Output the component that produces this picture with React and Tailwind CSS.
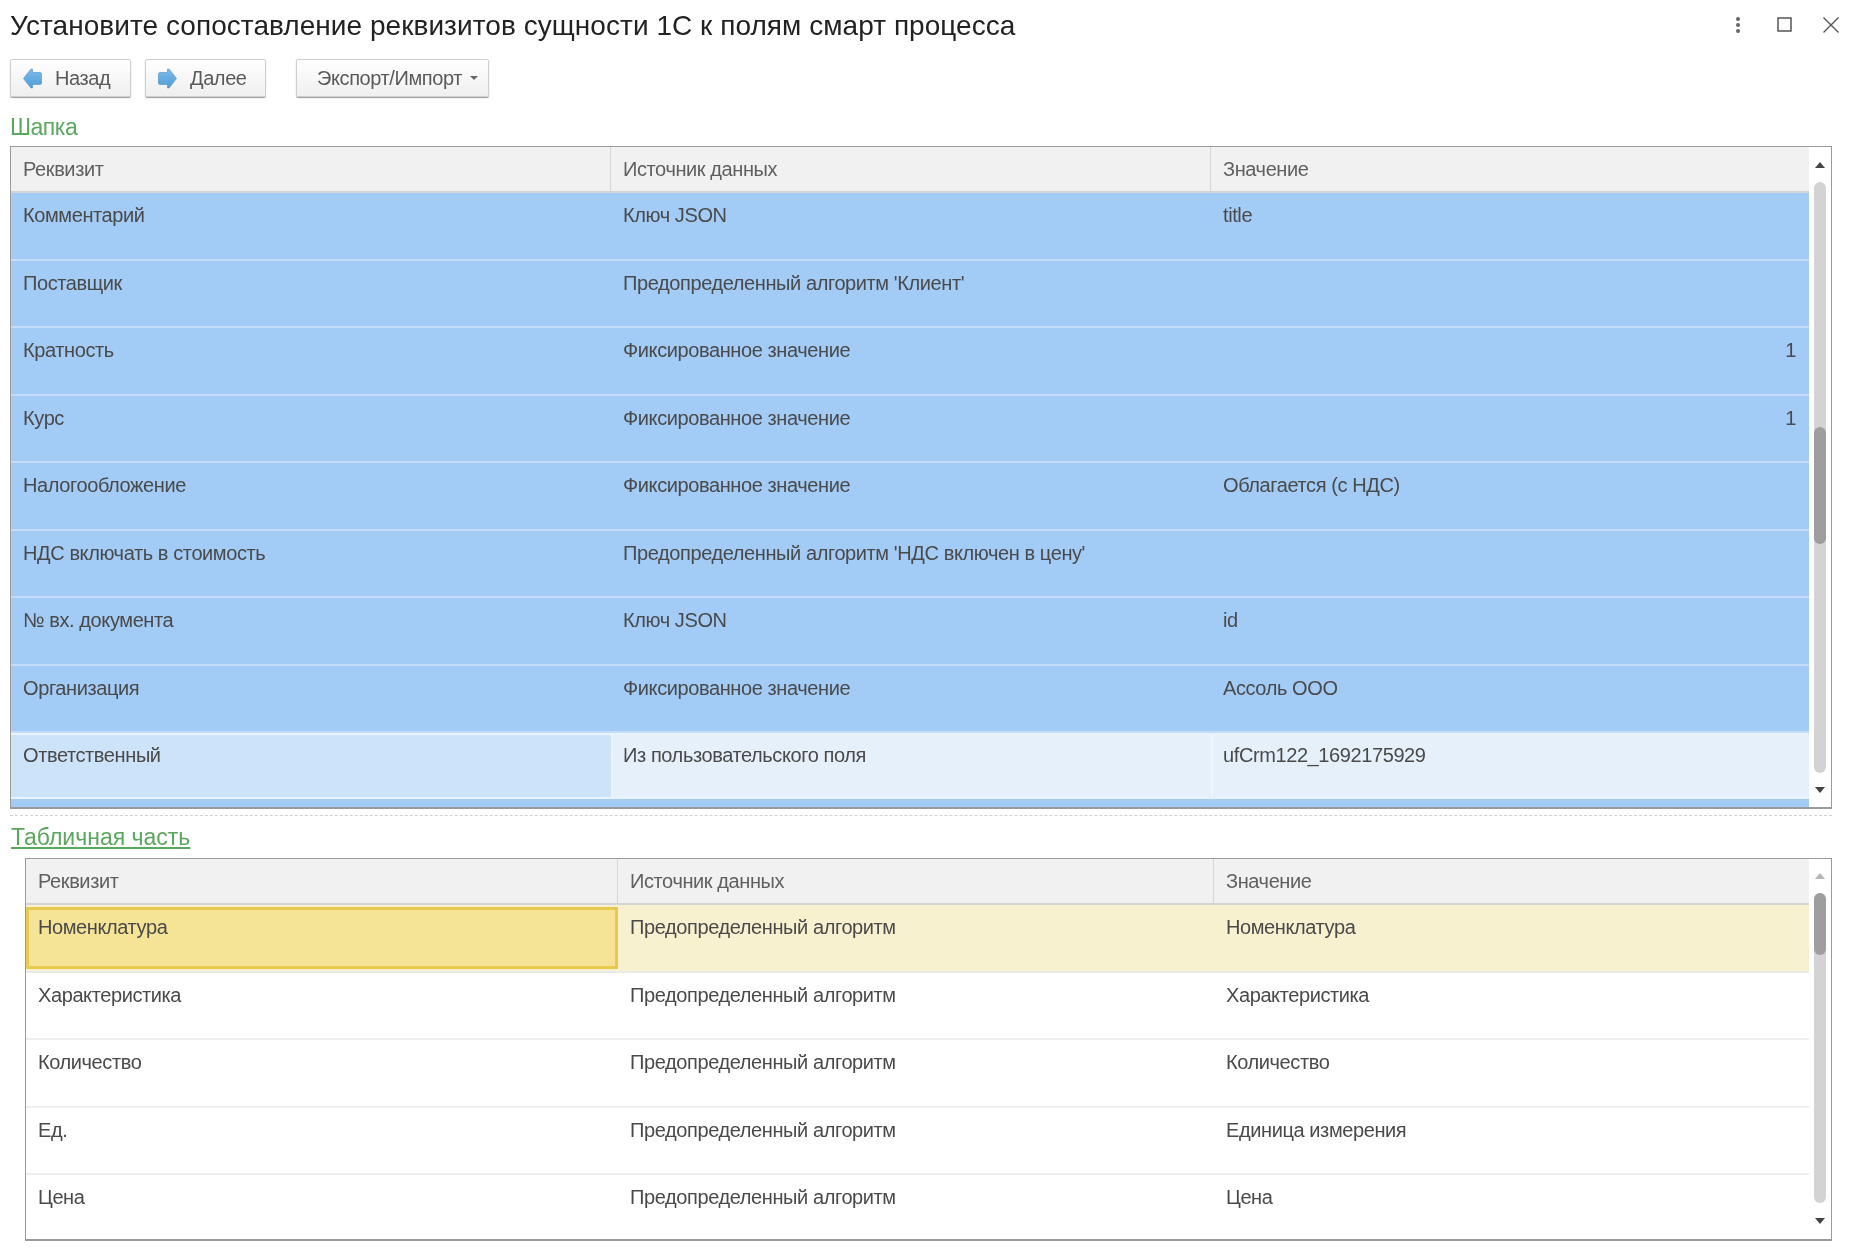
const FONT = "font-['Liberation_Sans',Arial,sans-serif]";

const top = [
  ["Комментарий", "Ключ JSON", "title"],
  ["Поставщик", "Предопределенный алгоритм 'Клиент'", ""],
  ["Кратность", "Фиксированное значение", "1", true],
  ["Курс", "Фиксированное значение", "1", true],
  ["Налогообложение", "Фиксированное значение", "Облагается (с НДС)"],
  ["НДС включать в стоимость", "Предопределенный алгоритм 'НДС включен в цену'", ""],
  ["№ вх. документа", "Ключ JSON", "id"],
  ["Организация", "Фиксированное значение", "Ассоль ООО"],
];

const bottom = [
  ["Характеристика", "Предопределенный алгоритм", "Характеристика"],
  ["Количество", "Предопределенный алгоритм", "Количество"],
  ["Ед.", "Предопределенный алгоритм", "Единица измерения"],
  ["Цена", "Предопределенный алгоритм", "Цена"],
];

function Arrow({ dir }) {
  return (
    <svg width="19" height="21" viewBox="0 0 19 21" className="shrink-0">
      <defs>
        <linearGradient id="ag" x1="0" y1="0" x2="0" y2="1">
          <stop offset="0" stopColor="#7dbdea" />
          <stop offset="1" stopColor="#4f9bd8" />
        </linearGradient>
      </defs>
      <path
        d={dir === "left"
          ? "M0.5 10.5 L8 1 L9.5 1 L9.5 4.5 L17 4.5 Q18.5 4.5 18.5 6 L18.5 15 Q18.5 16.5 17 16.5 L9.5 16.5 L9.5 20 L8 20 Z"
          : "M18.5 10.5 L11 1 L9.5 1 L9.5 4.5 L2 4.5 Q0.5 4.5 0.5 6 L0.5 15 Q0.5 16.5 2 16.5 L9.5 16.5 L9.5 20 L11 20 Z"}
        fill="url(#ag)"
        stroke="#4a8fc9"
        strokeWidth="0.6"
      />
    </svg>
  );
}

function Button({ className, children }) {
  return (
    <button className={"flex h-[38px] items-center rounded-[2px] border border-[#cfcfcf] bg-gradient-to-b from-white to-[#efefef] text-[20px] leading-none tracking-[-0.4px] text-[#5a5a5a] shadow-[0_1px_1px_#999] " + className}>
      {children}
    </button>
  );
}

function Tri({ up, light }) {
  return (
    <svg width="10" height="6" viewBox="0 0 10 6">
      <path d={up ? "M5 0 L10 6 L0 6 Z" : "M5 6 L10 0 L0 0 Z"} fill={light ? "#b5b5b5" : "#444"} />
    </svg>
  );
}

function Scroll({ upLight, thumbTop, thumbH, trackH, thumbColor, upH, downH }) {
  return (
    <div className="flex h-full w-[22px] shrink-0 flex-col items-center">
      <div className={"flex w-full items-center justify-center " + upH}>
        <Tri up light={upLight} />
      </div>
      <div className={"relative w-[12px] rounded-[6px] bg-[#d3d3d3] " + trackH}>
        <div className={"absolute left-0 w-full rounded-[6px] " + thumbTop + " " + thumbH + " " + thumbColor} />
      </div>
      <div className={"flex w-full items-center justify-center " + downH}>
        <Tri />
      </div>
    </div>
  );
}

function Header({ cols }) {
  return (
    <div className="flex h-[46px] shrink-0 border-b-2 border-[#d4d4d4] bg-[#f1f1f1] text-[#606060]">
      {["Реквизит", "Источник данных", "Значение"].map((t, i) => (
        <div key={t} className={"flex items-center border-[#d6d6d6] " + cols[i]}>
          {t}
        </div>
      ))}
    </div>
  );
}

function Cell({ className, right, children }) {
  return (
    <div className={"h-full pt-[11px] leading-[23px] " + (right ? "text-right " : "") + className}>{children}</div>
  );
}

export default function App() {
  const colsA = ["w-[600px] border-r pl-[12px]", "w-[600px] border-r pl-[12px]", "flex-1 pl-[12px]"];
  const colsB = ["w-[592px] border-r pl-[12px]", "w-[596px] border-r pl-[12px]", "flex-1 pl-[12px]"];
  return (
    <div className={"h-[1253px] w-[1858px] overflow-hidden bg-white text-[20px] tracking-[-0.4px] text-[#4a4a4a] blur-[0.4px] " + FONT}>
      <div className="flex h-[50px] items-center justify-between pl-[10px] pr-[18px] pt-[1px]">
        <h1 className="text-[28px] font-normal leading-[50px] tracking-[0.05px] text-[#222]">
          Установите сопоставление реквизитов сущности 1С к полям смарт процесса
        </h1>
        <div className="flex items-center">
          <svg width="6" height="18" viewBox="0 0 6 18" className="mb-[2px] mr-[36px]">
            <circle cx="3" cy="3" r="2" fill="#666" />
            <circle cx="3" cy="9" r="2" fill="#666" />
            <circle cx="3" cy="15" r="2" fill="#666" />
          </svg>
          <svg width="16" height="16" viewBox="0 0 16 16" className="mb-[2px] mr-[29px]">
            <rect x="1" y="1" width="13" height="13" fill="none" stroke="#555" strokeWidth="1.5" />
          </svg>
          <svg width="18" height="18" viewBox="0 0 18 18" className="mb-[2px]">
            <path d="M1.5 1.5 L16.5 16.5 M16.5 1.5 L1.5 16.5" stroke="#555" strokeWidth="1.4" />
          </svg>
        </div>
      </div>

      <div className="mt-[9px] flex pl-[10px]">
        <Button className="w-[121px] gap-[13px] pl-[12px]">
          <Arrow dir="left" />
          Назад
        </Button>
        <Button className="ml-[14px] w-[121px] gap-[13px] pl-[12px]">
          <Arrow dir="right" />
          Далее
        </Button>
        <Button className="ml-[30px] w-[193px] pl-[20px]">
          Экспорт/Импорт
          <span className="ml-[8px] h-0 w-0 border-x-[4px] border-t-[4px] border-x-transparent border-t-[#666]" />
        </Button>
      </div>

      <div className="mt-[13px] h-[36px] pl-[10px] text-[23px] leading-[34px] tracking-[-0.5px] text-[#5aa85e]">Шапка</div>

      <div className="ml-[10px] flex h-[663px] w-[1822px] border border-b-2 border-[#9a9a9a]">
        <div className="flex w-[1798px] shrink-0 flex-col">
          <Header cols={colsA} />
          {top.map((r, i) => (
            <div key={i} className="flex h-[67.5px] shrink-0 border-b-2 border-[#c4dcf7] bg-[#a2cbf5]">
              <Cell className="w-[600px] pl-[12px]">{r[0]}</Cell>
              <Cell className="w-[600px] pl-[12px]">{r[1]}</Cell>
              <Cell right={r[3]} className="flex-1 pl-[12px] pr-[13px]">{r[2]}</Cell>
            </div>
          ))}
          <div className="flex h-[66px] shrink-0 border-y-2 border-[#e9f3fd]">
            <Cell className="w-[600px] bg-[#cde3f9] !pt-[9px] pl-[12px]">Ответственный</Cell>
            <Cell className="w-[600px] border-l-2 border-[#eef5fc] bg-[#e5f0fa] !pt-[9px] pl-[10px]">Из пользовательского поля</Cell>
            <Cell className="flex-1 border-l-2 border-[#eef5fc] bg-[#e5f0fa] !pt-[9px] pl-[10px]">ufCrm122_1692175929</Cell>
          </div>
          <div className="flex-1 bg-[#a2cbf5]" />
        </div>
        <Scroll upH="h-[35px]" trackH="h-[591px]" downH="h-[34px]" thumbTop="top-[245px]" thumbH="h-[117px]" thumbColor="bg-[#9e9e9e]" />
      </div>

      <div className="ml-[10px] mt-[6px] w-[1822px] border-t border-dashed border-[#d0d0d0]" />

      <div className="h-[42px] pl-[11px] pt-[7px]">
        <span className="text-[23px] leading-[28px] tracking-normal text-[#5aa85e] underline underline-offset-2">Табличная часть</span>
      </div>

      <div className="ml-[25px] flex h-[383px] w-[1807px] border border-b-2 border-[#9a9a9a]">
        <div className="flex w-[1783px] shrink-0 flex-col">
          <Header cols={colsB} />
          <div className="flex h-[67.5px] shrink-0 border-b-2 border-[#e9e9e9] bg-[#f8f1cf]">
            <div className="mt-[2px] h-[62px] w-[592px] border-[3px] border-[#e8c94f] bg-[#f5e396] pl-[9px] pt-[6px] leading-[23px]">Номенклатура</div>
            <Cell className="w-[596px] pl-[12px]">Предопределенный алгоритм</Cell>
            <Cell className="flex-1 pl-[12px]">Номенклатура</Cell>
          </div>
          {bottom.map((r, i) => (
            <div key={i} className={"flex shrink-0 " + (i < 3 ? "h-[67.5px] border-b-2 border-[#eeeeee]" : "flex-1")}>
              <Cell className="w-[592px] pl-[12px]">{r[0]}</Cell>
              <Cell className="w-[596px] pl-[12px]">{r[1]}</Cell>
              <Cell className="flex-1 pl-[12px]">{r[2]}</Cell>
            </div>
          ))}
        </div>
        <Scroll upLight upH="h-[34px]" trackH="h-[311px]" downH="h-[36px]" thumbTop="top-0" thumbH="h-[62px]" thumbColor="bg-[#9e9e9e]" />
      </div>
    </div>
  );
}
